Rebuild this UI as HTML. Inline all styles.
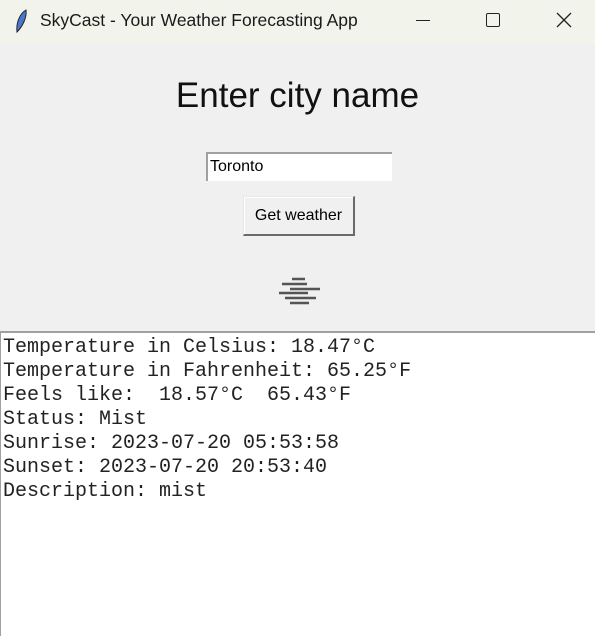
<!DOCTYPE html>
<html><head><style>
*{margin:0;padding:0;box-sizing:border-box}
body{width:595px;height:636px;overflow:hidden;background:#f0f0f0;font-family:"Liberation Sans",sans-serif;position:relative}
.tb{position:absolute;left:0;top:0;width:595px;height:44px;background:#f2f4ec}
.tt{position:absolute;left:40px;top:10px;font-size:17.5px;color:#1a1a1a}
.h{position:absolute;left:0;width:595px;top:76px;text-align:center;font-size:35px;color:#111}
.in{position:absolute;left:206px;top:152px;width:186px;height:29px;background:#fff;border-top:2px solid #a0a0a0;border-left:2px solid #a0a0a0;font-size:16px;padding:4px 2px;color:#000}
.bt{position:absolute;left:243px;top:196px;width:112px;height:40px;background:#f0f0f0;border:1px solid #e8e8e8;border-right:2px solid #6a6a6a;border-bottom:2px solid #6a6a6a;box-shadow:inset 1px 1px 0 #fff;font-size:16px;text-align:center;line-height:37px;color:#000}
.ta{position:absolute;left:0;top:331px;width:595px;height:305px;background:#fff;border-top:2px solid #a0a0a0;border-left:1px solid #a0a0a0}
pre{font-family:"Liberation Mono",monospace;font-size:20px;line-height:24px;color:#222;padding:3px 0 0 2px}
</style></head><body>
<div class="tb">
<svg style="position:absolute;left:14px;top:8px" width="14" height="26" viewBox="0 0 14 26"><path d="M3 24 C2 16 5 6 12 2 C13 9 9 18 3 24Z" fill="#4a78c8" stroke="#223" stroke-width="1"/></svg>
<div class="tt">SkyCast - Your Weather Forecasting App</div>
<div style="position:absolute;left:416px;top:20px;width:14px;height:1px;background:#222"></div>
<div style="position:absolute;left:486px;top:13px;width:14px;height:14px;border:1.3px solid #222;border-radius:2px"></div>
<svg style="position:absolute;left:556px;top:12px" width="16" height="16"><path d="M1 1L15 15M15 1L1 15" stroke="#222" stroke-width="1.3"/></svg>
</div>
<div class="h">Enter city name</div>
<div class="in">Toronto</div>
<div class="bt">Get weather</div>
<svg style="position:absolute;left:278px;top:276px" width="44" height="30"><g stroke="#555" stroke-width="2.5"><path d="M14 3H27M4 8H29M12 13H42M1 17H30M7 22H38M12 27H31"/></g></svg>
<div class="ta"><pre>Temperature in Celsius: 18.47°C
Temperature in Fahrenheit: 65.25°F
Feels like:  18.57°C  65.43°F
Status: Mist
Sunrise: 2023-07-20 05:53:58
Sunset: 2023-07-20 20:53:40
Description: mist</pre></div>
</body></html>
